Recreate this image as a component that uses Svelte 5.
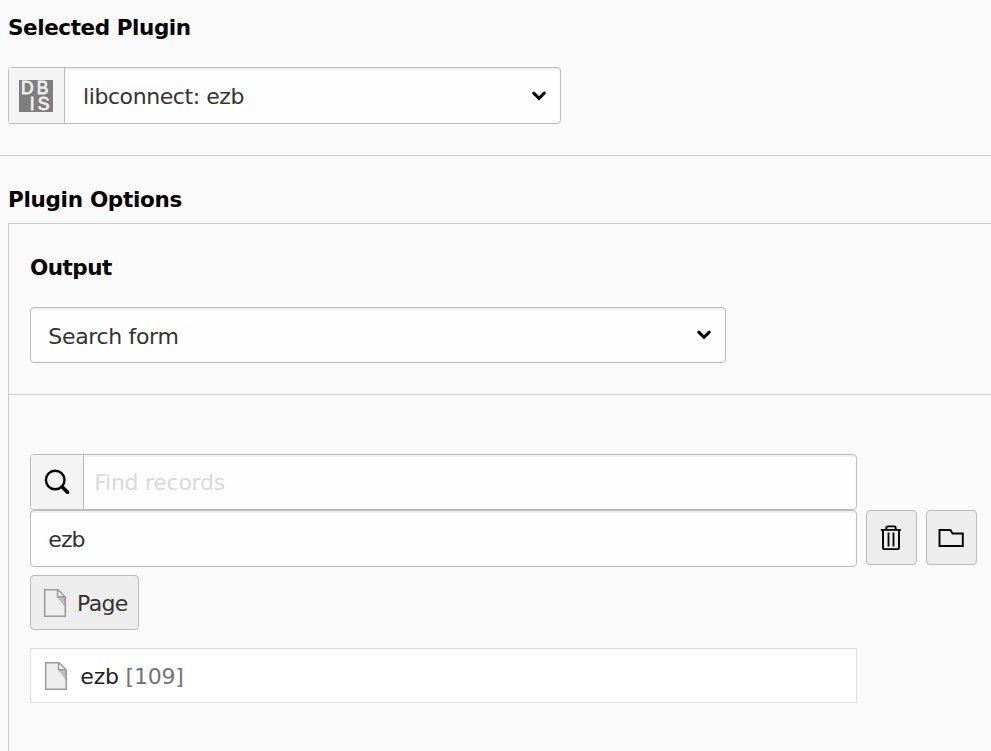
<script>
  const record = { name: 'ezb', uid: 109 };
</script>

{#snippet chevron()}
  <svg class="chevron" width="16" height="12" viewBox="0 0 16 12">
    <path d="M2.8 3.2 8 8.4 13.2 3.2" fill="none" stroke="#000" stroke-width="3.1" stroke-linecap="round" />
  </svg>
{/snippet}

{#snippet page()}
  <svg class="page" width="22" height="28" viewBox="0 0 22 28">
    <path d="M.7.7H14L21.3 8V27.3H.7Z" fill="#eee" />
    <path d="M13 8H21V18Z" fill="#bdbdbd" />
    <path d="M13.5 1V7.7H21Z" fill="#fff" />
    <path d="M.7.7H14L21.3 8V27.3H.7ZM13.6 1V7.7H21" fill="none" stroke="#999" stroke-width="1.5" />
  </svg>
{/snippet}

<main>
  <section class="plugin">
    <h2 class="t1">Selected Plugin</h2>
    <div class="group selected">
      <span class="addon logo">
        <svg width="34" height="32" viewBox="0 0 34 32">
          <rect width="34" height="32" fill="#7d7d7d" />
          <g fill="#eee" stroke="#eee" stroke-width=".8" font-family="Liberation Sans, sans-serif" font-size="17.5">
            <text x="2 17.8" y="14.2">DB</text>
            <text x="10.8 18.8" y="30.2">IS</text>
          </g>
        </svg>
      </span>
      <div class="field select"><span class="v1">libconnect: ezb</span>{@render chevron()}</div>
    </div>
  </section>

  <section class="options">
    <h2 class="t2">Plugin Options</h2>
    <div class="panel">
      <div class="output">
        <h2 class="t3">Output</h2>
        <div class="group form"><div class="field select"><span class="v2">Search form</span>{@render chevron()}</div></div>
      </div>
      <div class="records">
        <div class="group search">
          <span class="addon">
            <svg width="26" height="26" viewBox="0 0 26 26" fill="none" stroke="#000">
              <circle cx="11.2" cy="11" r="9.3" stroke-width="2.4" />
              <path d="m18 17.7 5.5 5.4" stroke-width="3.7" stroke-linecap="round" />
            </svg>
          </span>
          <div class="field find"><span class="v3">Find records</span></div>
        </div>
        <div class="row">
          <div class="group value"><div class="field"><span class="v4">ezb</span></div></div>
          <button class="tool" aria-label="Delete">
            <svg width="22" height="26" viewBox="0 0 22 26" fill="none" stroke="#000" stroke-width="1.9">
              <path d="M.8 4.9H21M3 5V22.5Q3 24.1 4.6 24.1H17.4Q19 24.1 19 22.5V5M6.3 4.5V3Q6.3 1.4 7.9 1.4H14.1Q15.7 1.4 15.7 3V4.5" />
              <path d="M8.5 7.5V21.5M13.5 7.5V21.5" stroke-width="1.8" />
            </svg>
          </button>
          <button class="tool" aria-label="Browse">
            <svg width="26" height="20" viewBox="0 0 26 20" fill="none" stroke="#000" stroke-width="1.9">
              <path d="M1.5 18V2H12.5L14.5 5.5H24.8V18Z" />
            </svg>
          </button>
        </div>
        <button class="add">{@render page()}<span class="v5">Page</span></button>
        <div class="item">{@render page()}<span class="v6">{record.name} <i>[{record.uid}]</i></span></div>
      </div>
    </div>
  </section>
</main>

<style>
  :global(body) { margin: 0; background: #fafafa; overflow: hidden; }
  main {
    height: 751px;
    overflow: hidden;
    display: flex;
    flex-direction: column;
    font: 22px/30px 'DejaVu Sans', sans-serif;
    color: #333;
    white-space: nowrap;
  }
  main * { box-sizing: border-box; }
  h2 { margin: 0; padding-top: 1px; font-size: 21.5px; line-height: 30px; font-weight: 700; color: #000; }
  span[class^='v'] { padding-top: 2px; }
  .t1 { letter-spacing: -.42px; }
  .t2 { letter-spacing: -.3px; }
  .t3 { letter-spacing: -.5px; }
  .v1 { letter-spacing: -.42px; }
  .v2, .v3 { letter-spacing: -.27px; margin-left: -.7px; }
  span.v2 { padding-top: 3px; letter-spacing: -.33px; }
  .v4 { letter-spacing: -.9px; margin-left: -.7px; }
  .v5 { letter-spacing: -.65px; }
  .v6 { letter-spacing: -.2px; margin-left: -.7px; }
  .plugin { height: 156px; padding: 12px 0 0 8px; border-bottom: 1px solid #ccc; }
  .group {
    display: flex;
    border: 1px solid #bbb;
    border-radius: 4px;
    background: #fefefe;
    overflow: hidden;
  }
  .addon {
    flex: none;
    display: flex;
    align-items: center;
    justify-content: center;
    width: 53px;
    background: #f4f4f4;
    border-right: 1px solid #bbb;
  }
  .logo { width: 56px; padding-right: 1px; }
  .field {
    flex: 1;
    display: flex;
    align-items: center;
    padding-left: 18px;
    box-shadow: inset 0 2px 2px rgba(0, 0, 0, .06);
  }
  .select { justify-content: space-between; padding-right: 13px; }
  .find { padding-left: 11px; color: #d9d9d9; }
  .selected { width: 553px; height: 57px; margin-top: 24px; }
  .options { flex: 1; display: flex; flex-direction: column; padding: 28px 0 0 8px; }
  .panel { flex: 1; margin-top: 8px; border: solid #ccc; border-width: 1px 0 0 1px; }
  .output { height: 171px; padding: 28px 0 0 21px; border-bottom: 1px solid #ccc; }
  .form { width: 696px; height: 56px; margin-top: 24px; }
  .records { padding: 59px 0 0 21px; }
  .search { width: 827px; height: 56px; }
  .row { display: flex; gap: 9px; }
  .value { width: 827px; height: 57px; }
  button {
    flex: none;
    display: flex;
    align-items: center;
    justify-content: center;
    width: 51px;
    height: 55px;
    padding: 0;
    border: 1px solid #bbb;
    border-radius: 4px;
    background: #ededed;
    color: #333;
    font: inherit;
  }
  .tool { padding-right: 1px; }
  .add { width: 109px; margin-top: 8px; justify-content: flex-start; padding-left: 13px; gap: 11px; }
  .item {
    display: flex;
    align-items: center;
    gap: 14px;
    width: 827px;
    height: 55px;
    margin-top: 18px;
    padding-left: 14px;
    background: #fff;
    border: 1px solid #ddd;
    color: #212121;
  }
  i { font-style: normal; color: #737373; }
  svg { display: block; flex: none; overflow: visible; }
</style>
